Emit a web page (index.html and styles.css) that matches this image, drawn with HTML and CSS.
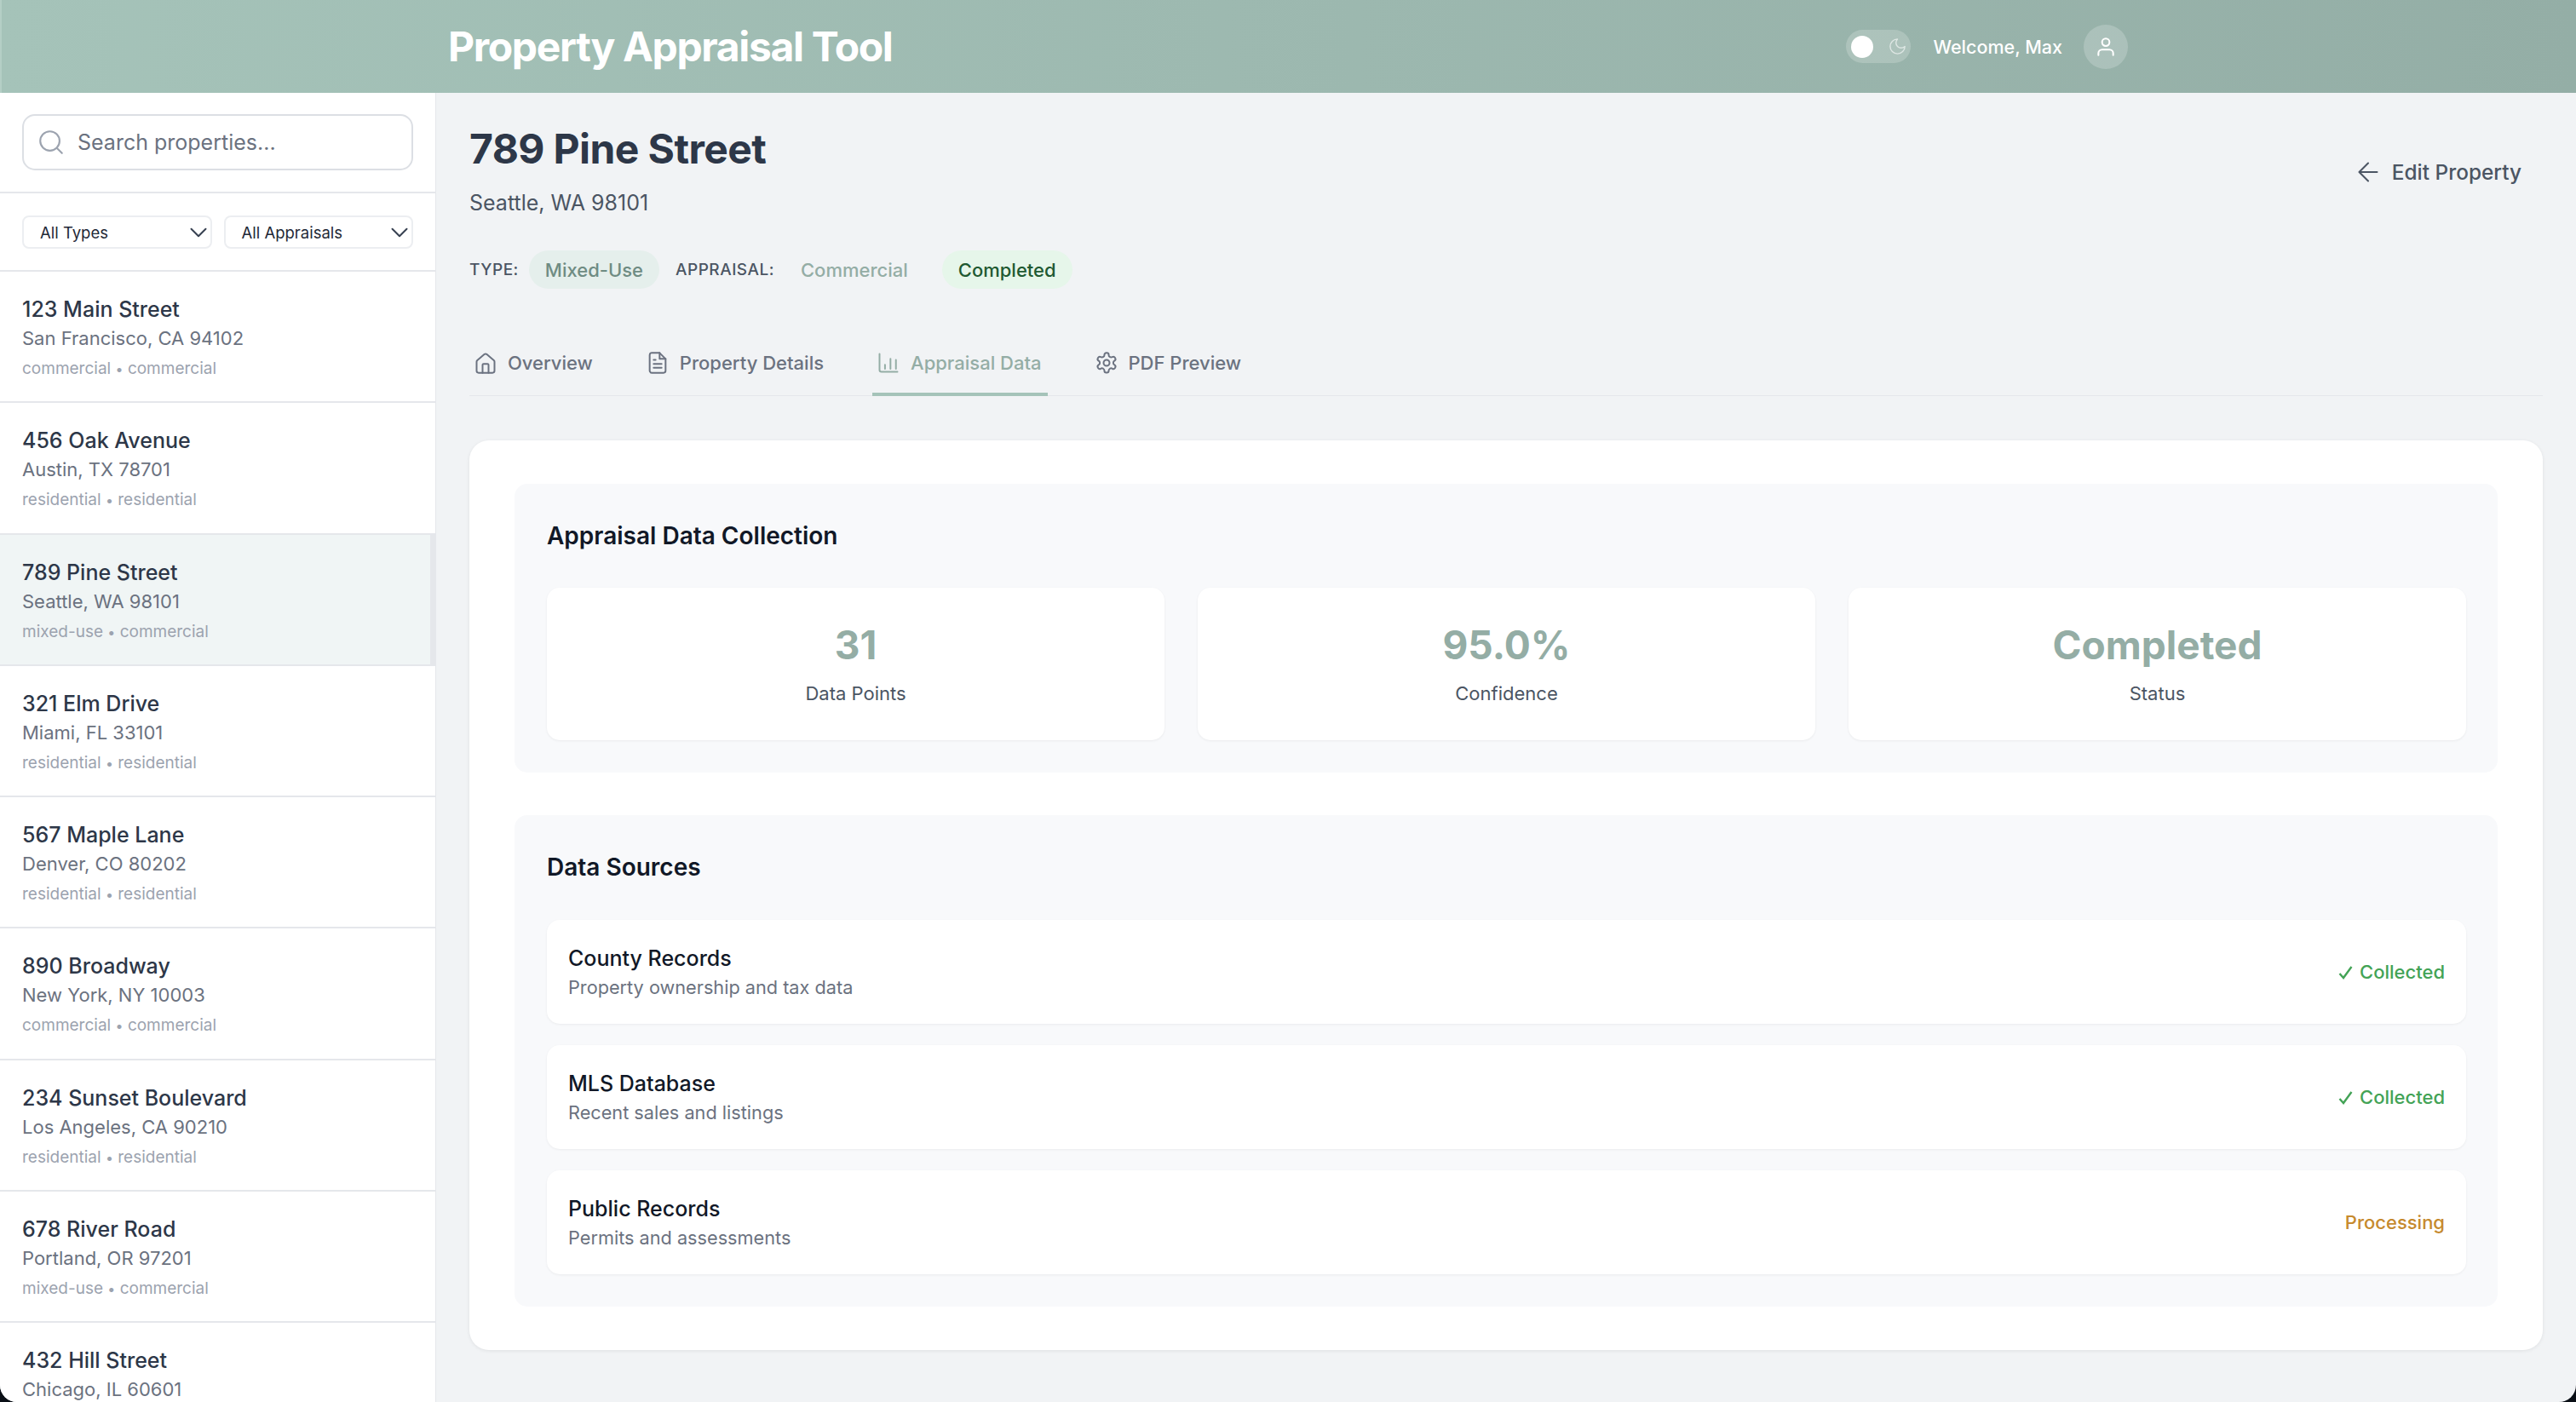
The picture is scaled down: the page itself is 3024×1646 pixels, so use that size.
FILE: index.html
```html
<!DOCTYPE html>
<html lang="en">
<head>
  <meta charset="UTF-8" />
  <title>Property Appraisal Tool</title>
  <link rel="stylesheet" href="styles.css">
</head>
<body>
  <div class="app">
    <header class="topbar">
      <h1 class="brand">Property Appraisal Tool</h1>
      <div class="topbar-right">
        <div class="toggle">
          <span class="knob"></span>
          <svg class="moon" viewBox="0 0 24 24"><path d="M12 3a6 6 0 0 0 9 9 9 9 0 1 1-9-9z"/></svg>
        </div>
        <span class="welcome">Welcome, Max</span>
        <div class="avatar">
          <svg viewBox="0 0 24 24"><circle cx="12" cy="7" r="4"/><path d="M20 21v-2a4 4 0 0 0-4-4H8a4 4 0 0 0-4 4v2"/></svg>
        </div>
      </div>
    </header>

    <div class="body-row">
      <aside class="sidebar">
        <div class="search-wrap">
          <div class="search">
            <svg viewBox="0 0 24 24"><circle cx="11" cy="11" r="8"/><path d="M21 21l-4.3-4.3"/></svg>
            <span>Search properties...</span>
          </div>
        </div>
        <div class="filters">
          <div class="select">All Types<svg viewBox="0 0 24 24"><path d="M6 9l6 6 6-6"/></svg></div>
          <div class="select">All Appraisals<svg viewBox="0 0 24 24"><path d="M6 9l6 6 6-6"/></svg></div>
        </div>
        <div class="item">
          <div class="item-name">123 Main Street</div>
          <div class="item-addr">San Francisco, CA 94102</div>
          <div class="item-meta">commercial <span class="dot">•</span> commercial</div>
        </div>
        <div class="item">
          <div class="item-name">456 Oak Avenue</div>
          <div class="item-addr">Austin, TX 78701</div>
          <div class="item-meta">residential <span class="dot">•</span> residential</div>
        </div>
        <div class="item active">
          <div class="item-name">789 Pine Street</div>
          <div class="item-addr">Seattle, WA 98101</div>
          <div class="item-meta">mixed-use <span class="dot">•</span> commercial</div>
        </div>
        <div class="item">
          <div class="item-name">321 Elm Drive</div>
          <div class="item-addr">Miami, FL 33101</div>
          <div class="item-meta">residential <span class="dot">•</span> residential</div>
        </div>
        <div class="item">
          <div class="item-name">567 Maple Lane</div>
          <div class="item-addr">Denver, CO 80202</div>
          <div class="item-meta">residential <span class="dot">•</span> residential</div>
        </div>
        <div class="item">
          <div class="item-name">890 Broadway</div>
          <div class="item-addr">New York, NY 10003</div>
          <div class="item-meta">commercial <span class="dot">•</span> commercial</div>
        </div>
        <div class="item">
          <div class="item-name">234 Sunset Boulevard</div>
          <div class="item-addr">Los Angeles, CA 90210</div>
          <div class="item-meta">residential <span class="dot">•</span> residential</div>
        </div>
        <div class="item">
          <div class="item-name">678 River Road</div>
          <div class="item-addr">Portland, OR 97201</div>
          <div class="item-meta">mixed-use <span class="dot">•</span> commercial</div>
        </div>
        <div class="item">
          <div class="item-name">432 Hill Street</div>
          <div class="item-addr">Chicago, IL 60601</div>
        </div>
      </aside>

      <main class="content">
        <div class="prop-head">
          <div>
            <h2 class="prop-title">789 Pine Street</h2>
            <p class="prop-addr">Seattle, WA 98101</p>
            <div class="tags">
              <span class="tag-label">TYPE:</span>
              <span class="badge type">Mixed-Use</span>
              <span class="tag-label">APPRAISAL:</span>
              <span class="badge plain">Commercial</span>
              <span class="badge done">Completed</span>
            </div>
          </div>
          <div class="edit-btn">
            <svg viewBox="0 0 24 24"><path d="M19 12H5M12 19l-7-7 7-7"/></svg>
            Edit Property
          </div>
        </div>

        <nav class="tabs">
          <div class="tab">
            <svg viewBox="0 0 24 24"><path d="M3 11a2 2 0 0 1 .7-1.5l7-6a2 2 0 0 1 2.6 0l7 6A2 2 0 0 1 21 11v9a2 2 0 0 1-2 2H5a2 2 0 0 1-2-2z"/><path d="M15 22v-8a1 1 0 0 0-1-1h-4a1 1 0 0 0-1 1v8"/></svg>
            Overview
          </div>
          <div class="tab">
            <svg viewBox="0 0 24 24"><path d="M14 2H6a2 2 0 0 0-2 2v16a2 2 0 0 0 2 2h12a2 2 0 0 0 2-2V8z"/><path d="M14 2v6h6M16 13H8M16 17H8M10 9H8"/></svg>
            Property Details
          </div>
          <div class="tab current">
            <svg viewBox="0 0 24 24"><path d="M3 3v16a2 2 0 0 0 2 2h16M8.5 18v-4M14 18V8M19.5 18V9"/></svg>
            Appraisal Data
          </div>
          <div class="tab">
            <svg viewBox="0 0 24 24"><circle cx="12" cy="12" r="3"/><path d="M12.2 2h-.4a2 2 0 0 0-2 2v.2a2 2 0 0 1-1 1.7l-.4.3a2 2 0 0 1-2 0l-.2-.1a2 2 0 0 0-2.7.7l-.2.4a2 2 0 0 0 .7 2.7l.2.1a2 2 0 0 1 1 1.7v.5a2 2 0 0 1-1 1.7l-.2.1a2 2 0 0 0-.7 2.7l.2.4a2 2 0 0 0 2.7.7l.2-.1a2 2 0 0 1 2 0l.4.3a2 2 0 0 1 1 1.7v.2a2 2 0 0 0 2 2h.4a2 2 0 0 0 2-2v-.2a2 2 0 0 1 1-1.7l.4-.3a2 2 0 0 1 2 0l.2.1a2 2 0 0 0 2.7-.7l.2-.4a2 2 0 0 0-.7-2.7l-.2-.1a2 2 0 0 1-1-1.7v-.5a2 2 0 0 1 1-1.7l.2-.1a2 2 0 0 0 .7-2.7l-.2-.4a2 2 0 0 0-2.7-.7l-.2.1a2 2 0 0 1-2 0l-.4-.3a2 2 0 0 1-1-1.7V4a2 2 0 0 0-2-2z"/></svg>
            PDF Preview
          </div>
        </nav>

        <div class="card">
          <section class="panel">
            <h3 class="panel-title">Appraisal Data Collection</h3>
            <div class="stats">
              <div class="stat">
                <div class="stat-value">31</div>
                <div class="stat-label">Data Points</div>
              </div>
              <div class="stat">
                <div class="stat-value">95.0%</div>
                <div class="stat-label">Confidence</div>
              </div>
              <div class="stat">
                <div class="stat-value">Completed</div>
                <div class="stat-label">Status</div>
              </div>
            </div>
          </section>

          <section class="panel sources">
            <h3 class="panel-title">Data Sources</h3>
            <div class="source">
              <div>
                <div class="source-name">County Records</div>
                <div class="source-desc">Property ownership and tax data</div>
              </div>
              <div class="source-state ok"><svg viewBox="0 0 17 17"><path d="M1.5 10l4.5 5L15.5 2"/></svg>Collected</div>
            </div>
            <div class="source">
              <div>
                <div class="source-name">MLS Database</div>
                <div class="source-desc">Recent sales and listings</div>
              </div>
              <div class="source-state ok"><svg viewBox="0 0 17 17"><path d="M1.5 10l4.5 5L15.5 2"/></svg>Collected</div>
            </div>
            <div class="source">
              <div>
                <div class="source-name">Public Records</div>
                <div class="source-desc">Permits and assessments</div>
              </div>
              <div class="source-state busy">Processing</div>
            </div>
          </section>
        </div>
      </main>
    </div>
  </div>
</body>
</html>
```

FILE: styles.css
```css
* { box-sizing: border-box; }
html, body {
  margin: 0;
  height: 100%;
  background: #0a0f16;
}
body {
  font-family: Inter, "Noto Sans", sans-serif;
  overflow: hidden;
}
h1, h2, h3, p { margin: 0; }
svg {
  fill: none;
  stroke: currentColor;
  stroke-width: 2;
  stroke-linecap: round;
  stroke-linejoin: round;
  flex-shrink: 0;
}
.app {
  height: 1646px;
  display: flex;
  flex-direction: column;
  overflow: hidden;
  background: #f1f3f5;
  border-radius: 0 0 20px 20px;
}

/* top bar */
.topbar {
  height: 109px;
  flex-shrink: 0;
  padding: 0 526px 0 524px;
  display: flex;
  align-items: center;
  justify-content: space-between;
  background: linear-gradient(90deg, #a5c3b9, #94aea6);
  border-left: 2px solid #b4cfc6;
  color: #fff;
}
.brand {
  font-size: 48px;
  font-weight: 700;
  letter-spacing: -1.35px;
}
.topbar-right {
  display: flex;
  align-items: center;
}
.toggle {
  width: 76px;
  height: 39px;
  border-radius: 20px;
  background: rgba(255,255,255,0.2);
  display: flex;
  align-items: center;
  justify-content: space-between;
  padding: 0 4px 0 6px;
}
.knob {
  width: 26px;
  height: 26px;
  border-radius: 50%;
  background: #fff;
}
.moon {
  width: 23px;
  height: 23px;
  opacity: 0.6;
  stroke-width: 1.5;
}
.welcome {
  font-size: 21.5px;
  font-weight: 500;
  margin: 0 25px 0 27px;
}
.avatar {
  width: 52px;
  height: 52px;
  border-radius: 50%;
  background: rgba(255,255,255,0.2);
  display: flex;
  align-items: center;
  justify-content: center;
}
.avatar svg {
  width: 26px;
  height: 26px;
  stroke-width: 1.9;
}

/* sidebar */
.body-row {
  flex: 1;
  display: flex;
  min-height: 0;
}
.sidebar {
  width: 512px;
  flex-shrink: 0;
  background: #fff;
  border-right: 1px solid #e5e7eb;
  overflow: hidden;
}
.search-wrap {
  padding: 25px 26px 25px;
  border-bottom: 2px solid #e5e7eb;
}
.search {
  height: 66px;
  border: 2px solid #dcdfe4;
  border-radius: 15px;
  display: flex;
  align-items: center;
  padding: 0 15px;
  gap: 14px;
  color: #6b7280;
  font-size: 25px;
}
.search svg {
  width: 34px;
  height: 34px;
  color: #9ca3af;
  stroke-width: 1.5;
}
.filters {
  padding: 26px 26px 25px;
  display: flex;
  gap: 14px;
  border-bottom: 2px solid #e5e7eb;
}
.select {
  flex: 1;
  height: 39px;
  border: 2px solid #eceef1;
  border-radius: 8px;
  display: flex;
  align-items: center;
  justify-content: space-between;
  padding: 0 0 0 19px;
  font-size: 18.5px;
  color: #1f2937;
}
.select svg {
  width: 34px;
  height: 34px;
  margin-right: -3px;
  color: #374151;
  stroke-width: 1.4;
}
.item {
  height: 154.3px;
  padding: 26px 26px 0;
  border-bottom: 2px solid #e5e7eb;
}
.item.active {
  background: #f0f5f5;
  border-right: 6px solid #e5e7eb;
}
.item-name {
  font-size: 25px;
  font-weight: 500;
  line-height: 36px;
  color: #2d3748;
}
.item-addr {
  font-size: 22px;
  line-height: 32px;
  color: #6b7280;
}
.item-meta {
  font-size: 19px;
  line-height: 40px;
  color: #9ca3af;
}
.dot {
  font-size: 16px;
}

/* main */
.content {
  flex: 1;
  min-width: 0;
  padding: 36px 39px 0;
}
.prop-head {
  display: flex;
  justify-content: space-between;
  align-items: flex-start;
}
.prop-title {
  font-size: 48px;
  line-height: 60px;
  font-weight: 700;
  letter-spacing: -0.6px;
  color: #2d3748;
}
.prop-addr {
  font-size: 25px;
  line-height: 40px;
  margin-top: 13px;
  color: #4b5563;
}
.tags {
  display: flex;
  align-items: center;
  height: 45px;
  margin-top: 36px;
}
.tag-label {
  font-size: 19px;
  font-weight: 500;
  letter-spacing: 0.5px;
  color: #4b5563;
}
.badge {
  height: 45px;
  border-radius: 23px;
  padding: 0 19px;
  display: flex;
  align-items: center;
  font-size: 22px;
  font-weight: 500;
}
.badge.type {
  margin: 0 19px 0 12px;
  background: #e5efec;
  color: #6f8c83;
}
.badge.plain {
  margin: 0 21px 0 12px;
  color: #94ada5;
}
.badge.done {
  background: #e6f6ea;
  color: #1f5a32;
}
.edit-btn {
  display: flex;
  align-items: center;
  gap: 10px;
  margin-top: 39px;
  padding: 0 25px 0 0;
  font-size: 24.4px;
  font-weight: 500;
  color: #4b5563;
}
.edit-btn svg {
  width: 36px;
  height: 36px;
  stroke-width: 1.4;
}

/* tabs */
.tabs {
  display: flex;
  gap: 50px;
  margin-top: 48px;
  border-bottom: 1px solid #e5e7eb;
}
.tab {
  display: flex;
  align-items: center;
  gap: 12px;
  height: 78px;
  padding: 0 7px 0 5px;
  font-size: 22px;
  font-weight: 500;
  color: #6b7280;
  margin-bottom: -1px;
}
.tab svg {
  width: 28px;
  height: 28px;
  stroke-width: 1.7;
}
.tab.current {
  color: #94ada5;
  box-shadow: inset 0 -4px 0 #a5c3b9;
}

/* card */
.card {
  margin-top: 52px;
  height: 1068px;
  background: #fff;
  border-radius: 23px;
  padding: 51px 53px;
  box-shadow: 0 1px 4px rgba(0,0,0,0.08);
}
.panel {
  background: #f8f9fb;
  border-radius: 15px;
  padding: 41px 37px 0 38px;
  height: 339px;
}
.panel.sources {
  margin-top: 50px;
  height: 577px;
}
.panel-title {
  font-size: 28px;
  line-height: 40px;
  font-weight: 600;
  color: #111827;
}
.stats {
  display: grid;
  grid-template-columns: repeat(3, 1fr);
  gap: 39px;
  margin-top: 41px;
}
.stat {
  height: 179px;
  background: #fff;
  border-radius: 15px;
  box-shadow: 0 1px 3px rgba(0,0,0,0.06);
  text-align: center;
  padding-top: 37px;
}
.stat-value {
  font-size: 46px;
  line-height: 60px;
  font-weight: 700;
  color: #94ada5;
}
.stat-label {
  font-size: 22px;
  line-height: 36px;
  margin-top: 9px;
  color: #4b5563;
}
.source {
  height: 122px;
  margin-top: 25px;
  background: #fff;
  border-radius: 15px;
  box-shadow: 0 1px 3px rgba(0,0,0,0.06);
  padding: 0 25px;
  display: flex;
  align-items: center;
  justify-content: space-between;
}
.panel-title + .source { margin-top: 42px; }
.source-name {
  font-size: 25px;
  font-weight: 500;
  line-height: 36px;
  color: #111827;
}
.source-desc {
  font-size: 21.7px;
  line-height: 32px;
  color: #6b7280;
}
.source-state {
  display: flex;
  align-items: center;
  gap: 8px;
  font-size: 22px;
  font-weight: 500;
}
.source-state svg {
  width: 17px;
  height: 17px;
  stroke-width: 2.4;
  stroke-linecap: butt;
  stroke-linejoin: miter;
}
.source-state.ok { color: #43a356; }
.source-state.busy { color: #c68a2e; }
```
